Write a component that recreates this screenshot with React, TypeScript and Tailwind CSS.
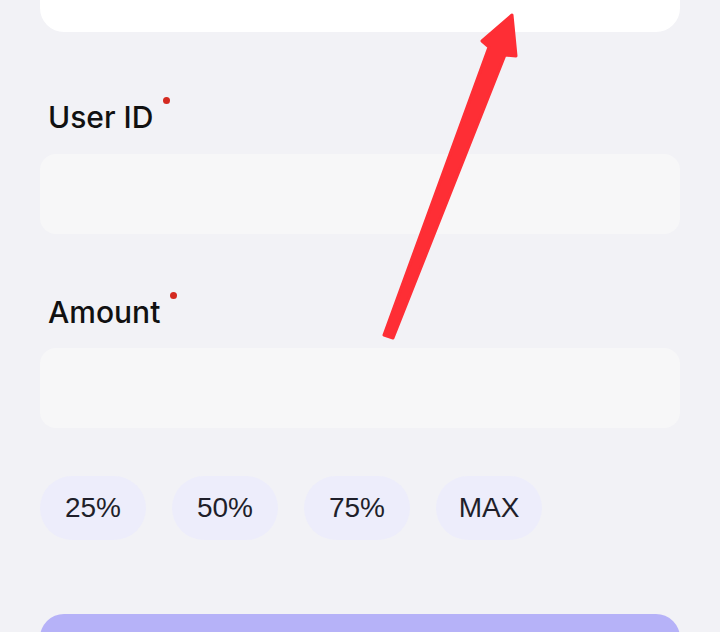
import React from 'react';

// 필드 라벨 + 필수 표시
function FieldLabel({ text }: { text: string }) {
  return (
    <div className="flex items-start h-[36px] pl-2">
      <span
        className="text-[30px] leading-[36px] font-medium text-[#111111]"
        style={{ fontFamily: 'Inter, "Liberation Sans", sans-serif' }}
      >
        {text}
      </span>
      <span className="ml-[10px] -mt-[2px] w-[7px] h-[7px] rounded-full bg-[#d42a20]" />
    </div>
  );
}

const presets = ['25%', '50%', '75%', 'MAX'];

export default function App() {
  return (
    <div
      className="relative h-[632px] overflow-hidden bg-[#f2f2f6] px-10"
      style={{ fontFamily: '"Liberation Sans", Arial, sans-serif' }}
    >
      {/* 위쪽 카드 (잘린 부분) */}
      <div className="h-8 rounded-b-[24px] bg-white" />

      <div className="mt-[67px]">
        <FieldLabel text="User ID" />
        <div className="mt-[19px] h-20 rounded-2xl bg-[#f7f7f8]" />
      </div>

      <div className="mt-[60px]">
        <FieldLabel text="Amount" />
        <div className="mt-[18px] h-20 rounded-2xl bg-[#f7f7f8]" />
      </div>

      <div className="mt-12 flex gap-[26px]">
        {presets.map((p) => (
          <button
            key={p}
            className="h-16 w-[106px] rounded-full bg-[#ededfb] text-[28px] text-[#1f1f2a]"
          >
            {p}
          </button>
        ))}
      </div>

      <button className="mt-[74px] h-16 w-full rounded-t-[24px] bg-[#b6b2f8]" />

      {/* 빨간 화살표 표시 */}
      <svg
        className="pointer-events-none absolute inset-0"
        width="720"
        height="632"
        viewBox="0 0 720 632"
      >
        <polygon
          points="384,335 489,47 482,41 512,15 516,56 505,55 393,338"
          fill="#fe2e35"
          stroke="#fe2e35"
          strokeWidth="3"
          strokeLinejoin="round"
        />
      </svg>
    </div>
  );
}
